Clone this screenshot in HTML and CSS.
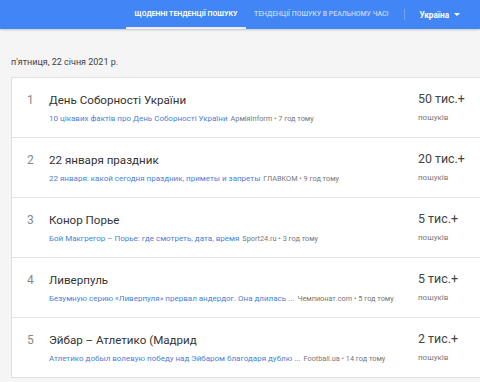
FILE: index.html
```html
<!DOCTYPE html>
<html>
<head>
	<meta charset="utf-8">
	<title>Тенденції пошуку</title>
	<link rel="stylesheet" href="styles.css">
</head>
<body>
  <header class="topbar">
    <nav class="tabs">
      <a class="tab active">ЩОДЕННІ ТЕНДЕНЦІЇ ПОШУКУ</a>
      <a class="tab">ТЕНДЕНЦІЇ ПОШУКУ В РЕАЛЬНОМУ ЧАСІ</a>
    </nav>
    <div class="divider"></div>
    <div class="country">Україна <span class="caret"></span></div>
  </header>

  <main class="content">
    <p class="date">п'ятниця, 22 січня 2021 р.</p>
    <div class="card">
      <div class="row">
        <div class="num">1</div>
        <div class="info">
          <div class="title">День Соборності України</div>
          <div class="sub"><a>10 цікавих фактів про День Соборності України</a> <span class="src">АрміяInform • 7 год тому</span></div>
        </div>
        <div class="count">
          <div class="amount">50 тис.+</div>
          <div class="label">пошуків</div>
        </div>
      </div>
      <div class="row">
        <div class="num">2</div>
        <div class="info">
          <div class="title">22 января праздник</div>
          <div class="sub"><a>22 января: какой сегодня праздник, приметы и запреты</a> <span class="src">ГЛАВКОМ • 9 год тому</span></div>
        </div>
        <div class="count">
          <div class="amount">20 тис.+</div>
          <div class="label">пошуків</div>
        </div>
      </div>
      <div class="row">
        <div class="num">3</div>
        <div class="info">
          <div class="title">Конор Порье</div>
          <div class="sub"><a>Бой Макгрегор – Порье: где смотреть, дата, время</a> <span class="src">Sport24.ru • 3 год тому</span></div>
        </div>
        <div class="count">
          <div class="amount">5 тис.+</div>
          <div class="label">пошуків</div>
        </div>
      </div>
      <div class="row">
        <div class="num">4</div>
        <div class="info">
          <div class="title">Ливерпуль</div>
          <div class="sub"><a>Безумную серию «Ливерпуля» прервал андердог. Она длилась ...</a> <span class="src">Чемпионат.com • 5 год тому</span></div>
        </div>
        <div class="count">
          <div class="amount">5 тис.+</div>
          <div class="label">пошуків</div>
        </div>
      </div>
      <div class="row">
        <div class="num">5</div>
        <div class="info">
          <div class="title">Эйбар – Атлетико (Мадрид</div>
          <div class="sub"><a>Атлетико добыл волевую победу над Эйбаром благодаря дублю ...</a> <span class="src">Football.ua • 14 год тому</span></div>
        </div>
        <div class="count">
          <div class="amount">2 тис.+</div>
          <div class="label">пошуків</div>
        </div>
      </div>
    </div>
  </main>
</body>
</html>
```

FILE: styles.css
```css
body {
	font-family: Roboto, "Noto Sans", Arial, sans-serif;
	margin: 0;
	padding: 0;
	background: #f5f5f5;
	color: #333;
	overflow: hidden;
}
.topbar {
	height: 29px;
	background: #4285f4;
	display: flex;
	align-items: stretch;
	box-shadow: 0 1px 2px rgba(0, 0, 0, 0.2);
}
.tabs {
	display: flex;
	margin-left: 126px;
}
.tab {
	font-size: 6.9px;
	font-weight: 500;
	color: rgba(255, 255, 255, 0.7);
	padding: 0 8px;
	display: flex;
	align-items: center;
	border-bottom: 2px solid transparent;
	white-space: nowrap;
}
.tab.active {
	font-size: 7px;
	color: #fff;
	font-weight: 700;
	border-bottom-color: #e8eefc;
	width: 104px;
	justify-content: center;
}
.divider {
	width: 1px;
	background: rgba(255, 255, 255, 0.25);
	margin: 9px 0 9px 8px;
}
.country {
	color: #fff;
	font-size: 8.2px;
	font-weight: 700;
	display: flex;
	align-items: center;
	margin-left: 14px;
}
.caret {
	width: 0;
	height: 0;
	border-left: 3px solid transparent;
	border-right: 3px solid transparent;
	border-top: 3px solid #fff;
	margin-left: 5px;
}
.content {
	padding-left: 11px;
}
.date {
	font-size: 9px;
	color: #444;
	margin: 28px 0 10px;
}
.card {
	background: #fff;
	border: 1px solid #e0e0e0;
	border-right: none;
	width: 480px;
}
.row {
	display: flex;
	height: 59px;
	border-bottom: 1px solid #e4e4e4;
}
.row:last-child {
	border-bottom: none;
}
.num {
	width: 37px;
	padding-left: 15px;
	box-sizing: border-box;
	font-size: 12px;
	color: #888;
	padding-top: 15px;
}
.info {
	width: 369px;
	padding-top: 14px;
}
.title {
	font-size: 11.6px;
	color: #333;
	line-height: 16px;
}
.sub {
	font-size: 8px;
	margin-top: 6px;
	white-space: nowrap;
}
.sub a {
	color: #4a7fd6;
}
.src {
	color: #777;
	font-size: 7.3px;
	margin-left: 1px;
}
.count {
	padding-top: 12px;
}
.amount {
	font-size: 12.4px;
	color: #444;
	line-height: 18px;
}
.label {
	font-size: 8px;
	color: #777;
	margin-top: 5px;
}
```
